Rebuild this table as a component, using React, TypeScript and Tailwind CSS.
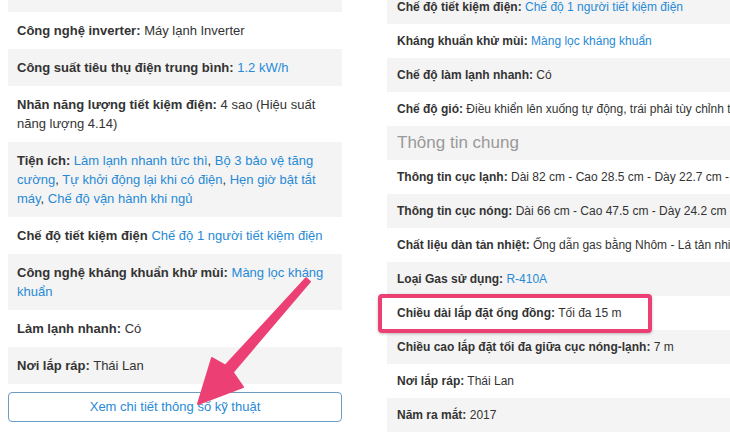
import React from "react";

type Part = { t: string; link?: boolean };
type Row = { label: string; parts: Part[] };

const leftRows: Row[] = [
  { label: "Công nghệ inverter:", parts: [{ t: "Máy lạnh Inverter" }] },
  { label: "Công suất tiêu thụ điện trung bình:", parts: [{ t: "1.2 kW/h", link: true }] },
  { label: "Nhãn năng lượng tiết kiệm điện:", parts: [{ t: "4 sao (Hiệu suất năng lượng 4.14)" }] },
  {
    label: "Tiện ích:",
    parts: [
      { t: "Làm lạnh nhanh tức thì", link: true },
      { t: ", " },
      { t: "Bộ 3 bảo vệ tăng cường", link: true },
      { t: ", " },
      { t: "Tự khởi động lại khi có điện", link: true },
      { t: ", " },
      { t: "Hẹn giờ bật tắt máy", link: true },
      { t: ", " },
      { t: "Chế độ vận hành khi ngủ", link: true },
    ],
  },
  { label: "Chế độ tiết kiệm điện", parts: [{ t: "Chế độ 1 người tiết kiệm điện", link: true }] },
  { label: "Công nghệ kháng khuẩn khử mùi:", parts: [{ t: "Màng lọc kháng khuẩn", link: true }] },
  { label: "Làm lạnh nhanh:", parts: [{ t: "Có" }] },
  { label: "Nơi lắp ráp:", parts: [{ t: "Thái Lan" }] },
];

const rightTop: Row[] = [
  { label: "Chế độ tiết kiệm điện:", parts: [{ t: "Chế độ 1 người tiết kiệm điện", link: true }] },
  { label: "Kháng khuẩn khử mùi:", parts: [{ t: "Màng lọc kháng khuẩn", link: true }] },
  { label: "Chế độ làm lạnh nhanh:", parts: [{ t: "Có" }] },
  { label: "Chế độ gió:", parts: [{ t: "Điều khiển lên xuống tự động, trái phải tùy chỉnh tay" }] },
];

const rightBottom: Row[] = [
  { label: "Thông tin cục lạnh:", parts: [{ t: "Dài 82 cm - Cao 28.5 cm - Dày 22.7 cm - Nặng 10 kg" }] },
  { label: "Thông tin cục nóng:", parts: [{ t: "Dài 66 cm - Cao 47.5 cm - Dày 24.2 cm - Nặng 23 kg" }] },
  { label: "Chất liệu dàn tản nhiệt:", parts: [{ t: "Ống dẫn gas bằng Nhôm - Lá tản nhiệt bằng Nhôm" }] },
  { label: "Loại Gas sử dụng:", parts: [{ t: "R-410A", link: true }] },
  { label: "Chiều dài lắp đặt ống đồng:", parts: [{ t: "Tối đa 15 m" }] },
  { label: "Chiều cao lắp đặt tối đa giữa cục nóng-lạnh:", parts: [{ t: "7 m" }] },
  { label: "Nơi lắp ráp:", parts: [{ t: "Thái Lan" }] },
  { label: "Năm ra mắt:", parts: [{ t: "2017" }] },
];

function Content({ row }: { row: Row }) {
  return (
    <>
      <span className="font-bold">{row.label}</span>{" "}
      {row.parts.map((p, i) =>
        p.link ? (
          <span key={i} className="text-[#288ad6]">
            {p.t}
          </span>
        ) : (
          <span key={i}>{p.t}</span>
        )
      )}
    </>
  );
}

export default function App() {
  return (
    <div
      className="relative w-[730px] h-[433px] overflow-hidden bg-white flex text-[#333]"
      style={{ fontFamily: '"Liberation Sans", Arial, sans-serif' }}
    >
      {/* Left column */}
      <div className="ml-[8px] w-[334px] shrink-0 flex flex-col">
        <div className="h-[12px] bg-[#f4f4f4]" />
        {leftRows.map((r, i) => (
          <div
            key={i}
            className={`px-[9px] py-[9px] text-[13px] leading-[19px] ${i % 2 === 1 ? "bg-[#f4f4f4]" : "bg-white"}`}
          >
            <Content row={r} />
          </div>
        ))}
        <div className="mt-[8px] h-[30px] rounded-[4px] border-[1.5px] border-[#6d9cc0] flex items-center justify-center text-[13px] text-[#288ad6]">
          Xem chi tiết thông số kỹ thuật
        </div>
      </div>

      {/* Right column */}
      <div className="ml-[45px] flex-1 min-w-0 overflow-hidden -mt-[10px] flex flex-col">
        {rightTop.map((r, i) => (
          <div
            key={i}
            className={`h-[34px] shrink-0 px-[10px] flex items-center whitespace-nowrap text-[12px] ${i % 2 === 0 ? "bg-[#f4f4f4]" : "bg-white"}`}
          >
            <div>
              <Content row={r} />
            </div>
          </div>
        ))}
        <div className="h-[34px] shrink-0 px-[10px] flex items-center bg-[#f4f4f4] text-[17px] text-[#999]">
          Thông tin chung
        </div>
        {rightBottom.map((r, i) => (
          <div
            key={i}
            className={`h-[34px] shrink-0 px-[10px] flex items-center whitespace-nowrap text-[12px] ${i % 2 === 1 ? "bg-[#f4f4f4]" : "bg-white"}`}
          >
            <div>
              <Content row={r} />
            </div>
          </div>
        ))}
      </div>

      {/* Pink highlight box */}
      <div className="absolute left-[378px] top-[294px] w-[274px] h-[39px] rounded-[4px] border-[4px] border-[#ec4075] shadow-[0_1px_3px_rgba(0,0,0,0.25)]" />

      {/* Arrow */}
      <svg className="absolute left-0 top-0" width="730" height="433" viewBox="0 0 730 433">
        <polygon
          points="306.1,278.3 225.3,365.7 212,358 198,404 243,387 232.7,372.3 309.9,281.7"
          fill="#ec4075"
          stroke="#ec4075"
          strokeWidth="2"
          strokeLinejoin="round"
        />
      </svg>
    </div>
  );
}
